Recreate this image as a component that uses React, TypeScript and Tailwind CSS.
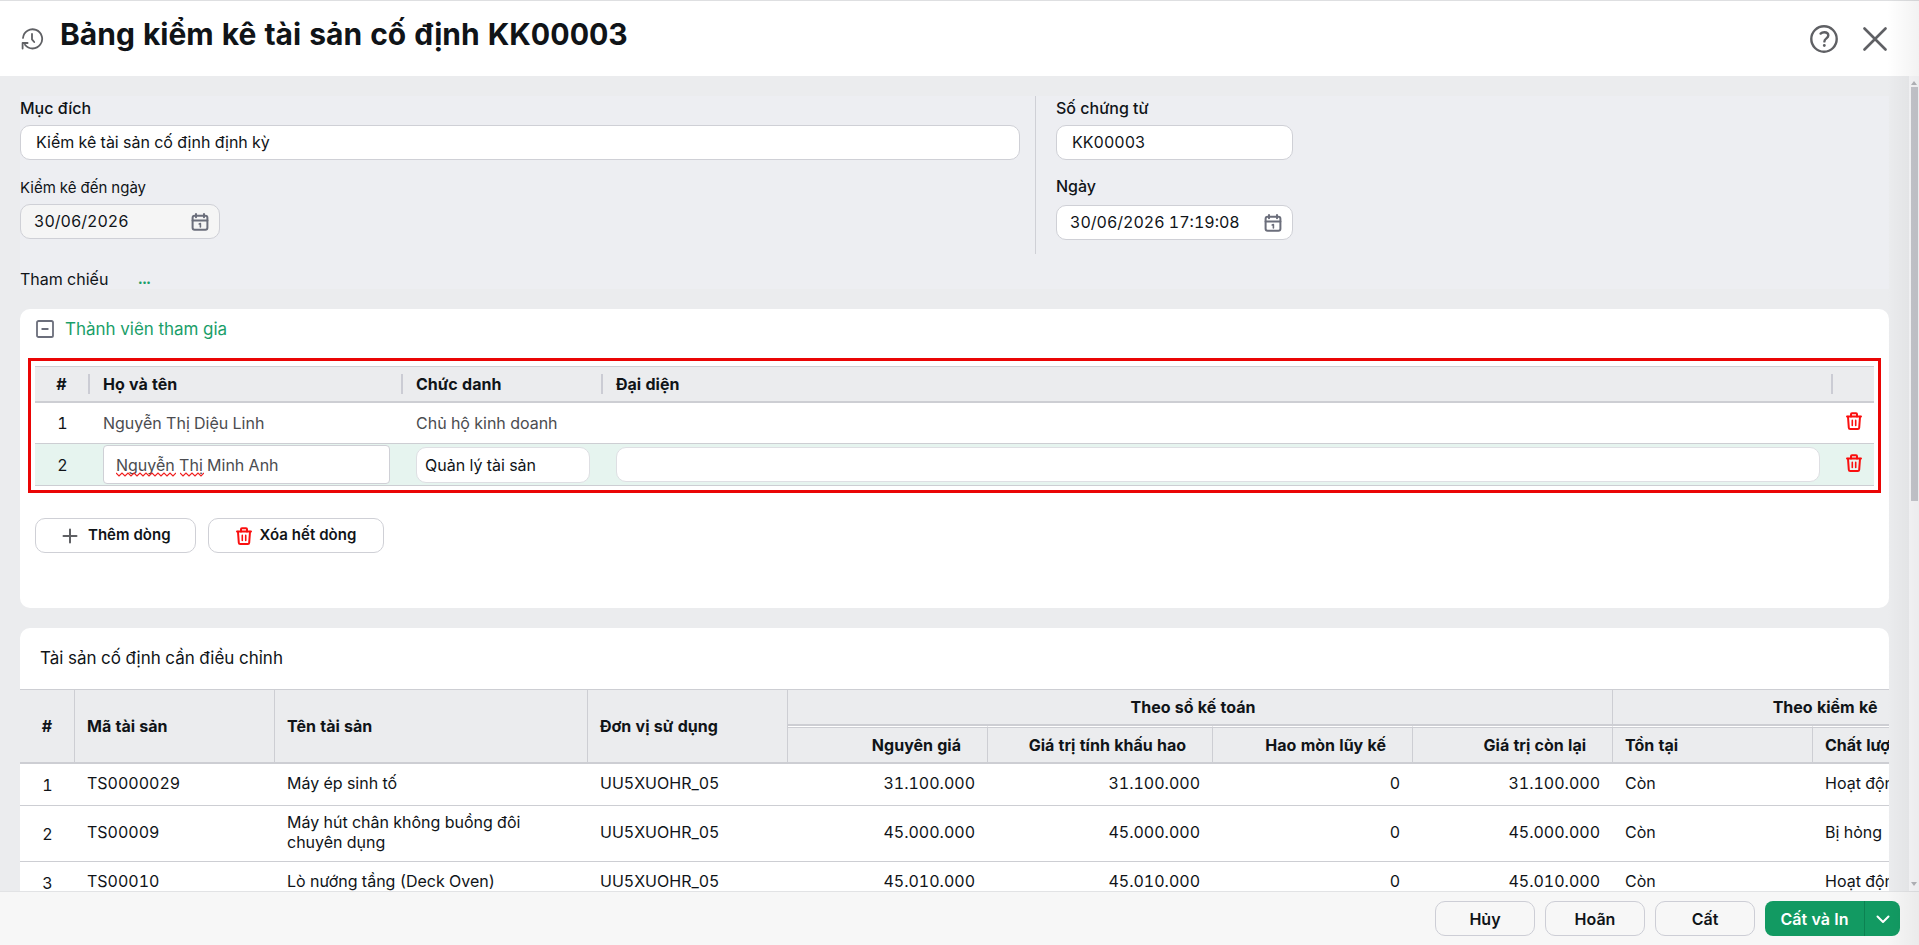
import { useId, useState } from "react";
import type { ReactNode } from "react";

type Member = {
  name: string;
  title: string;
  represent: string;
};

type Asset = {
  code: string;
  name: string;
  unit: string;
  cost: string;
  depreciable: string;
  accumulated: string;
  remaining: string;
  exists: string;
  quality: string;
};

const initialMembers: Member[] = [
  { name: "Nguyễn Thị Diệu Linh", title: "Chủ hộ kinh doanh", represent: "" },
  { name: "Nguyễn Thị Minh Anh", title: "Quản lý tài sản", represent: "" },
];

const assets: Asset[] = [
  {
    code: "TS0000029",
    name: "Máy ép sinh tố",
    unit: "UU5XUOHR_05",
    cost: "31.100.000",
    depreciable: "31.100.000",
    accumulated: "0",
    remaining: "31.100.000",
    exists: "Còn",
    quality: "Hoạt động tốt",
  },
  {
    code: "TS00009",
    name: "Máy hút chân không buồng đôi chuyên dụng",
    unit: "UU5XUOHR_05",
    cost: "45.000.000",
    depreciable: "45.000.000",
    accumulated: "0",
    remaining: "45.000.000",
    exists: "Còn",
    quality: "Bị hỏng",
  },
  {
    code: "TS00010",
    name: "Lò nướng tầng (Deck Oven)",
    unit: "UU5XUOHR_05",
    cost: "45.010.000",
    depreciable: "45.010.000",
    accumulated: "0",
    remaining: "45.010.000",
    exists: "Còn",
    quality: "Hoạt động tốt",
  },
];

function HistoryIcon() {
  return (
    <svg width="24" height="24" viewBox="0 0 24 24" fill="none" stroke="#5f6064" strokeWidth="1.8" strokeLinecap="round" strokeLinejoin="round">
      <path d="M3 11A9.6 9.6 0 1 1 5 17.8" />
      <path d="M2.6 21.600v-5.600h5" />
      <path d="M12 7v5.400l2.200 2.600" />
    </svg>
  );
}

function CalendarIcon() {
  return (
    <svg width="18" height="18" viewBox="0 0 18 18" fill="none" stroke="#6b6e7b" strokeWidth="2" strokeLinecap="round" strokeLinejoin="round">
      <rect x="1.6" y="2.8" width="14.8" height="14" rx="2" />
      <path d="M1.6 7.600h14.800M5 1v3.200M13 1v3.200" />
      <path d="M8.200 11l1.200-.5v3.500" strokeWidth="1.6" />
    </svg>
  );
}

function TrashIcon() {
  return (
    <svg width="16" height="18" viewBox="0 0 16 18" fill="none" stroke="#fa0f0f" strokeWidth="2" strokeLinecap="round" strokeLinejoin="round">
      <path d="M1 4.600h14" />
      <path d="M5 4.400V2.200a1 1 0 0 1 1-1h4a1 1 0 0 1 1 1v2.200" />
      <path d="M2 4.800l.8 10.900a1.400 1.400 0 0 0 1.400 1.300h7.600a1.400 1.400 0 0 0 1.400-1.300l.8-10.900" />
      <path d="M6.300 8.400v5M9.700 8.400v5" strokeWidth="1.6" />
    </svg>
  );
}

// zigzag mark under words the spell checker does not know
function Squiggle({ width }: { width: number }) {
  let d = "M0 1";
  for (let x = 3; x <= width; x += 3) {
    d += `L${x} ${x % 2 ? 4 : 1}`;
  }
  return (
    <svg width={width} height="5" viewBox={`0 0 ${width} 5`} fill="none" stroke="#f02020" strokeWidth="1.2">
      <path d={d} />
    </svg>
  );
}

function Field({ label, value, width, disabled, date, labelClass }: {
  label: string;
  value: string;
  width: string;
  disabled?: boolean;
  date?: boolean;
  labelClass: string;
}) {
  const id = useId();
  const [text, setText] = useState(value);

  return (
    <div>
      <label htmlFor={id} className={`block leading-6 ${labelClass}`}>
        {label}
      </label>
      <div className={`flex h-[35px] items-center rounded-[10px] border border-[#cfd0d6] ${width} ${disabled ? "bg-[#f5f5f5]" : "bg-white"}`}>
        <input
          id={id}
          value={text}
          readOnly={disabled}
          onChange={(e) => setText(e.target.value)}
          className={`h-full min-w-0 flex-1 bg-transparent pb-0.5 outline-none ${date ? "pl-[13px]" : "px-[15px]"}`}
        />
        {date && (
          <button type="button" aria-label="Chọn ngày" className="px-2.5">
            <CalendarIcon />
          </button>
        )}
      </div>
    </div>
  );
}

function OutlineButton({ icon, padding, onClick, children }: {
  icon: ReactNode;
  padding: string;
  onClick: () => void;
  children: ReactNode;
}) {
  return (
    <button
      type="button"
      onClick={onClick}
      className={`flex h-[35px] items-center gap-2 rounded-[10px] border border-[#cfd0d6] bg-white text-[15px] font-semibold ${padding}`}
    >
      {icon}
      {children}
    </button>
  );
}

function FooterButton({ children }: { children: ReactNode }) {
  return (
    <button type="button" className="h-[35px] w-[100px] rounded-[10px] border border-[#cdced6] bg-[#f7f7f7] font-semibold">
      {children}
    </button>
  );
}

function Members() {
  const [members, setMembers] = useState(initialMembers);
  const [active, setActive] = useState(1);

  const update = (index: number, field: keyof Member, value: string) => {
    setMembers(members.map((m, i) => (i === index ? { ...m, [field]: value } : m)));
  };

  const add = () => {
    setMembers([...members, { name: "", title: "", represent: "" }]);
    setActive(members.length);
  };

  const remove = (index: number) => {
    setMembers(members.filter((_, i) => i !== index));
  };

  const head = "border-r-2 border-[#cbccd4] py-0.5";

  return (
    <section className="mt-5 rounded-[10px] bg-white pb-[55px]">
      <h2 className="flex items-center gap-[11px] px-4 pt-2 text-[17px] leading-6 text-[#1a9e69]">
        <svg width="18" height="18" viewBox="0 0 18 18" fill="none" stroke="#6b6e7b" strokeWidth="1.8" strokeLinecap="round">
          <rect x="1" y="1" width="16" height="16" rx="1.6" />
          <path d="M6.200 9h5.600" />
        </svg>
        Thành viên tham gia
      </h2>
      <div className="mx-2 mt-[17px] border-3 border-[#ea0505] px-1 pt-[5px] pb-1">
        <table className="w-full table-fixed border-collapse text-left">
          <colgroup>
            <col className="w-[55px]" />
            <col className="w-[313px]" />
            <col className="w-[200px]" />
            <col />
            <col className="w-[41px]" />
          </colgroup>
          <thead>
            <tr className="h-[35px] border-t border-b-2 border-[#cdced3] bg-[#ebecee] leading-4">
              <th className="p-0 text-center font-bold">
                <div className={head}>#</div>
              </th>
              <th className="p-0 font-bold">
                <div className={`${head} pl-[13px]`}>Họ và tên</div>
              </th>
              <th className="p-0 font-bold">
                <div className={`${head} pl-[13px]`}>Chức danh</div>
              </th>
              <th className="p-0 font-bold">
                <div className={`${head} pl-[13px]`}>Đại diện</div>
              </th>
              <th className="p-0" aria-label="Xóa" />
            </tr>
          </thead>
          <tbody>
            {members.map((member, i) => (
              <tr
                key={i}
                onClick={() => setActive(i)}
                className={`h-[42px] border-b border-[#cdced3] ${i === active ? "bg-[#e6f4ef]" : ""}`}
              >
                <td className="p-0 text-center">{i + 1}</td>
                {i === active ? (
                  <>
                    <td className="px-[13px] py-0">
                      <div className="relative">
                        <input
                          aria-label="Họ và tên"
                          value={member.name}
                          spellCheck={false}
                          onChange={(e) => update(i, "name", e.target.value)}
                          className="block h-[39px] w-full rounded-sm border border-[#cfd0d6] bg-white px-3 text-[#4b4c50] outline-none"
                        />
                        {member.name === "Nguyễn Thị Minh Anh" && (
                          <div className="pointer-events-none absolute bottom-[7px] left-[13px] flex gap-1">
                            <Squiggle width={60} />
                            <Squiggle width={24} />
                          </div>
                        )}
                      </div>
                    </td>
                    <td className="px-[13px] py-0">
                      <input
                        aria-label="Chức danh"
                        value={member.title}
                        onChange={(e) => update(i, "title", e.target.value)}
                        className="block h-9 w-full rounded-[10px] border border-[#dedfe3] bg-white px-2 outline-none"
                      />
                    </td>
                    <td className="px-[13px] py-0">
                      <input
                        aria-label="Đại diện"
                        value={member.represent}
                        onChange={(e) => update(i, "represent", e.target.value)}
                        className="block h-[35px] w-full rounded-[10px] border border-[#dedfe3] bg-white px-2 outline-none"
                      />
                    </td>
                  </>
                ) : (
                  <>
                    <td className="px-[13px] py-0 text-[#4b4c50]">{member.name}</td>
                    <td className="px-[13px] py-0 text-[#4b4c50]">{member.title}</td>
                    <td className="px-[13px] py-0 text-[#4b4c50]">{member.represent}</td>
                  </>
                )}
                <td className="p-0">
                  <button type="button" aria-label="Xóa dòng" onClick={() => remove(i)} className="block px-[13px] pb-1">
                    <TrashIcon />
                  </button>
                </td>
              </tr>
            ))}
          </tbody>
        </table>
      </div>
      <div className="flex gap-3 px-[15px] pt-[25px]">
        <OutlineButton
          padding="px-6"
          onClick={add}
          icon={
            <svg width="20" height="20" viewBox="0 0 20 20" stroke="#5f6064" strokeWidth="2" strokeLinecap="round">
              <path d="M10 3.500v13M3.500 10h13" />
            </svg>
          }
        >
          Thêm dòng
        </OutlineButton>
        <OutlineButton padding="px-[27px]" onClick={() => setMembers([])} icon={<TrashIcon />}>
          Xóa hết dòng
        </OutlineButton>
      </div>
    </section>
  );
}

function Assets() {
  const side = "border-r border-b-2 border-[#cdced3] pr-[13px] pl-3 text-left font-bold";
  const sub = "border-r border-b-2 border-t border-[#cdced3] border-t-white font-bold shadow-[inset_0_1px_0_#cdced3]";
  const group = "border-r border-b-2 border-[#cdced3] text-center font-bold";
  const cell = "pr-[13px] pl-3 pt-1.5 pb-[9px]";

  return (
    <section className="mt-5 rounded-t-[10px] bg-white">
      <h2 className="px-5 pt-[18px] pb-[19px] text-[17px] leading-6">Tài sản cố định cần điều chỉnh</h2>
      <div className="overflow-hidden">
        <table className="w-[2018px] table-fixed border-separate border-spacing-0 border-t border-[#cdced3]">
          <colgroup>
            <col className="w-[55px]" />
            <col className="w-[200px]" />
            <col className="w-[313px]" />
            <col className="w-[200px]" />
            <col className="w-[200px]" />
            <col className="w-[225px]" />
            <col className="w-[200px]" />
            <col className="w-[200px]" />
            <col className="w-[200px]" />
            <col className="w-[225px]" />
          </colgroup>
          <thead className="bg-[#ebecee]">
            <tr className="h-9">
              <th rowSpan={2} className="border-r border-b-2 border-[#cdced3] text-center font-bold">#</th>
              <th rowSpan={2} className={side}>Mã tài sản</th>
              <th rowSpan={2} className={side}>Tên tài sản</th>
              <th rowSpan={2} className={side}>Đơn vị sử dụng</th>
              <th colSpan={4} className={`${group} pr-3.5`}>Theo sổ kế toán</th>
              <th colSpan={2} className={group}>Theo kiểm kê</th>
            </tr>
            <tr className="h-[38px]">
              <th className={`${sub} pr-[26px] text-right`}>Nguyên giá</th>
              <th className={`${sub} pr-[26px] text-right`}>Giá trị tính khấu hao</th>
              <th className={`${sub} pr-[26px] text-right`}>Hao mòn lũy kế</th>
              <th className={`${sub} pr-[26px] text-right`}>Giá trị còn lại</th>
              <th className={`${sub} px-3 text-left`}>Tồn tại</th>
              <th className={`${sub} px-3 text-left`}>Chất lượng hiện thời</th>
            </tr>
          </thead>
          <tbody className="leading-5 [&_td]:border-b [&_td]:border-[#cdced3]">
            {assets.map((asset, i) => (
              <tr key={asset.code} className="h-[42px]">
                <td className="text-center">{i + 1}</td>
                <td className={cell}>{asset.code}</td>
                <td className={cell}>{asset.name}</td>
                <td className={cell}>{asset.unit}</td>
                <td className={`${cell} text-right`}>{asset.cost}</td>
                <td className={`${cell} text-right`}>{asset.depreciable}</td>
                <td className={`${cell} text-right`}>{asset.accumulated}</td>
                <td className={`${cell} text-right`}>{asset.remaining}</td>
                <td className={cell}>{asset.exists}</td>
                <td className={cell}>{asset.quality}</td>
              </tr>
            ))}
          </tbody>
        </table>
      </div>
    </section>
  );
}

export default function App() {
  return (
    <div className="relative flex h-screen flex-col overflow-hidden bg-white font-['Inter',sans-serif] text-base text-[#101418] tabular-nums">
      <header className="flex h-[76px] shrink-0 items-center justify-between border-t border-[#dedfe1] pr-8 pl-5">
        <div className="flex items-center gap-4">
          <HistoryIcon />
          <h1 className="pb-2.5 text-[30px] leading-9 font-bold">Bảng kiểm kê tài sản cố định KK00003</h1>
        </div>
        <div className="flex items-center gap-[25px]">
          <button type="button" aria-label="Trợ giúp">
            <svg width="28" height="28" viewBox="0 0 28 28" fill="none" stroke="#5f6064" strokeWidth="2.4" strokeLinecap="round" strokeLinejoin="round">
              <circle cx="14" cy="14" r="12.7" />
              <path d="M10.600 8.600c1-1 2.300-1.400 3.700-1.400 2.400 0 4 1.300 4 3.300 0 2.800-3.900 2.900-3.900 5.900" />
              <path d="M14.300 20.300v.2" strokeWidth="2.8" />
            </svg>
          </button>
          <button type="button" aria-label="Đóng">
            <svg width="24" height="24" viewBox="0 0 24 24" fill="none" stroke="#5f6064" strokeWidth="2.6" strokeLinecap="round">
              <path d="M1.500 1.500l21 21M22.500 1.500l-21 21" />
            </svg>
          </button>
        </div>
      </header>

      <div className="flex min-h-0 flex-1 bg-[#ebecee]">
        <main className="min-w-0 flex-1 overflow-hidden px-5 pt-5">
          <div className="bg-[#edeef2]">
            <div className="flex">
              <div className="flex flex-1 flex-col gap-4 pr-[15px]">
                <Field label="Mục đích" value="Kiểm kê tài sản cố định định kỳ" width="w-full" labelClass="pb-[5px] font-medium" />
                <Field label="Kiểm kê đến ngày" value="30/06/2026" width="w-[200px]" labelClass="text-[15px] pb-1" disabled date />
              </div>
              <div className="flex w-[854px] flex-col gap-3.5 border-l border-[#cfd0d6] pb-3.5 pl-5">
                <Field label="Số chứng từ" value="KK00003" width="w-[237px]" labelClass="pb-[5px] font-medium" />
                <Field label="Ngày" value="30/06/2026 17:19:08" width="w-[237px]" labelClass="pb-[7px] font-medium" date />
              </div>
            </div>
            <div className="flex items-center gap-[30px] pt-[15px] leading-5">
              <span>Tham chiếu</span>
              <a href="#reference" className="text-[15px] font-bold text-[#1a9e69]">...</a>
            </div>
          </div>
          <Members />
          <Assets />
        </main>
        <div className="flex w-2.5 shrink-0 flex-col items-center bg-[#f8f8fa] py-[5px]">
          <svg width="6" height="4" viewBox="0 0 6 4" fill="#b4b5ba">
            <path d="M0 4l3-4 3 4z" />
          </svg>
          <div className="mt-0.5 h-[414px] w-[7px] bg-[#c6c7cd]" />
          <svg className="mt-auto" width="6" height="4" viewBox="0 0 6 4" fill="#b4b5ba">
            <path d="M0 0l3 4 3-4z" />
          </svg>
        </div>
      </div>

      <footer className="flex h-[54px] shrink-0 items-center justify-end gap-2.5 border-t border-[#e2e3e5] bg-[#f7f7f7] pr-[19px]">
        <FooterButton>Hủy</FooterButton>
        <FooterButton>Hoãn</FooterButton>
        <FooterButton>Cất</FooterButton>
        <div className="flex h-[35px] overflow-hidden rounded-lg bg-[#129a62] text-white">
          <button type="button" className="w-[100px] border-r border-[#0c8252] font-semibold">Cất và In</button>
          <button type="button" aria-label="Thêm lựa chọn in" className="flex w-[35px] items-center justify-center">
            <svg width="14" height="14" viewBox="0 0 14 14" fill="none" stroke="currentColor" strokeWidth="2" strokeLinecap="round" strokeLinejoin="round">
              <path d="M1.500 4.500l5.500 5.500 5.500-5.500" />
            </svg>
          </button>
        </div>
      </footer>
      <div className="pointer-events-none absolute inset-y-0 right-0 w-8 bg-linear-to-r from-black/0 to-black/5" />
    </div>
  );
}
